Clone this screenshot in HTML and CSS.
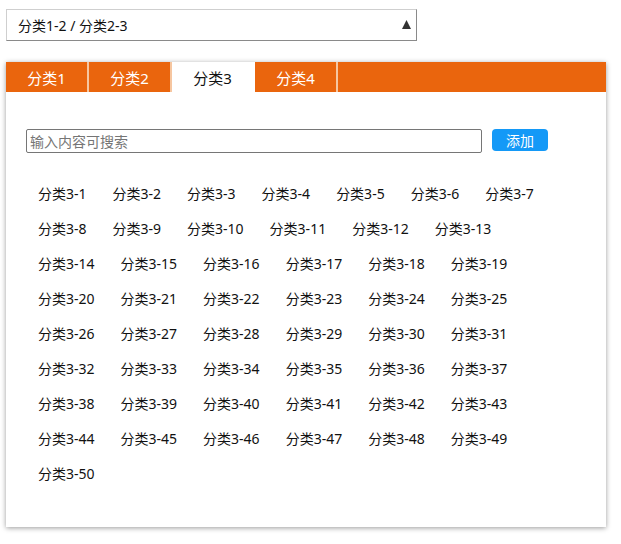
FILE: index.html
```html
<!DOCTYPE html>
<html lang="zh">
<head>
<meta charset="utf-8">
<title>分类选择</title>
<link rel="stylesheet" href="styles.css">
</head>
<body>
<div class="page">
  <div class="select">
    <span class="select-text">分类1-2 / 分类2-3</span>
    <svg class="select-arrow" width="9" height="9" viewBox="0 0 9 9"><polygon points="4.5,0 9,9 0,9" fill="#333"/></svg>
  </div>
  <div class="panel">
    <div class="tabs">
      <div class="tab">分类1</div>
      <div class="tab">分类2</div>
      <div class="tab active">分类3</div>
      <div class="tab">分类4</div>
    </div>
    <div class="body">
      <div class="search">
        <input class="search-input" type="text" placeholder="输入内容可搜索">
        <button class="add-btn">添加</button>
      </div>
      <div class="tags">
        <span class="tag">分类3-1</span><span class="tag">分类3-2</span><span class="tag">分类3-3</span><span class="tag">分类3-4</span><span class="tag">分类3-5</span><span class="tag">分类3-6</span><span class="tag">分类3-7</span>
        <span class="tag">分类3-8</span><span class="tag">分类3-9</span><span class="tag">分类3-10</span><span class="tag">分类3-11</span><span class="tag">分类3-12</span><span class="tag">分类3-13</span>
        <span class="tag">分类3-14</span><span class="tag">分类3-15</span><span class="tag">分类3-16</span><span class="tag">分类3-17</span><span class="tag">分类3-18</span><span class="tag">分类3-19</span>
        <span class="tag">分类3-20</span><span class="tag">分类3-21</span><span class="tag">分类3-22</span><span class="tag">分类3-23</span><span class="tag">分类3-24</span><span class="tag">分类3-25</span>
        <span class="tag">分类3-26</span><span class="tag">分类3-27</span><span class="tag">分类3-28</span><span class="tag">分类3-29</span><span class="tag">分类3-30</span><span class="tag">分类3-31</span>
        <span class="tag">分类3-32</span><span class="tag">分类3-33</span><span class="tag">分类3-34</span><span class="tag">分类3-35</span><span class="tag">分类3-36</span><span class="tag">分类3-37</span>
        <span class="tag">分类3-38</span><span class="tag">分类3-39</span><span class="tag">分类3-40</span><span class="tag">分类3-41</span><span class="tag">分类3-42</span><span class="tag">分类3-43</span>
        <span class="tag">分类3-44</span><span class="tag">分类3-45</span><span class="tag">分类3-46</span><span class="tag">分类3-47</span><span class="tag">分类3-48</span><span class="tag">分类3-49</span>
        <span class="tag">分类3-50</span>
      </div>
    </div>
  </div>
</div>
</body>
</html>
```

FILE: styles.css
```css
* { box-sizing: border-box; }
html, body { margin: 0; padding: 0; background: #fff; }
body {
  font-family: "Noto Sans", "Noto Sans CJK SC", sans-serif;
  color: #222;
}
.page {
  padding: 9px 6px 16px 6px;
}
.select {
  width: 411px;
  height: 32px;
  border-top: 1px solid #cfcfcf;
  border-left: 1px solid #cfcfcf;
  border-right: 1px solid #8a8a8a;
  border-bottom: 1px solid #8a8a8a;
  display: flex;
  align-items: center;
  justify-content: space-between;
  padding: 0 5px 0 11px;
  font-size: 14px;
  color: #111;
}
.select-arrow {
  display: block;
  margin-bottom: 1px;
}
.panel {
  margin-top: 21px;
  width: 600px;
  height: 465px;
  background: #fff;
  box-shadow: 0 1px 5px rgba(0,0,0,0.4);
}
.tabs {
  display: flex;
  height: 30px;
  background: #ea650d;
}
.tab {
  width: 83px;
  height: 30px;
  border-right: 2px solid #f6c6a0;
  color: #fff;
  font-size: 15px;
  display: flex;
  align-items: center;
  justify-content: center;
}
.tab.active {
  background: #fff;
  color: #111;
  border-right-color: #fff;
}
.body {
  padding: 37px 20px 0 20px;
}
.search {
  display: flex;
  align-items: flex-start;
}
.search-input {
  width: 456px;
  height: 24px;
  border: 1px solid #767676;
  border-radius: 2px;
  padding: 0 3px;
  font-family: inherit;
  font-size: 14px;
  color: #222;
  outline: none;
}
.search-input::placeholder { color: #757575; }
.add-btn {
  margin-left: 10px;
  width: 56px;
  height: 22px;
  border: none;
  border-radius: 4px;
  background: #1499f7;
  color: #fff;
  font-family: inherit;
  font-size: 14px;
  padding: 0;
}
.tags {
  margin-top: 23px;
  display: flex;
  flex-wrap: wrap;
}
.tag {
  height: 35px;
  line-height: 35px;
  padding: 0 14px 0 12px;
  font-size: 14px;
  color: #111;
}
```
